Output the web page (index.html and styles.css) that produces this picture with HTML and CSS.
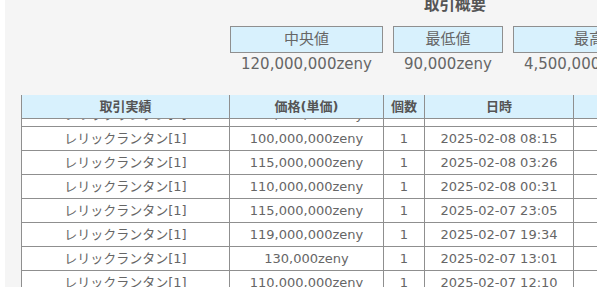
FILE: index.html
```html
<!DOCTYPE html>
<html lang="ja">
<head>
<meta charset="utf-8">
<title>取引概要</title>
<link rel="stylesheet" href="styles.css">
</head>
<body>
<div class="panel">
  <section class="summary">
    <h2 class="summary-title">取引概要</h2>
    <div class="stats">
      <div class="stat">
        <div class="stat-label">中央値</div>
        <div class="stat-value">120,000,000zeny</div>
      </div>
      <div class="stat">
        <div class="stat-label">最低値</div>
        <div class="stat-value">90,000zeny</div>
      </div>
      <div class="stat">
        <div class="stat-label">最高値</div>
        <div class="stat-value">4,500,000,000zeny</div>
      </div>
    </div>
  </section>

  <div class="history">
    <table class="grid grid-head">
      <colgroup><col class="c1"><col class="c2"><col class="c3"><col class="c4"><col class="c5"></colgroup>
      <thead>
        <tr><th>取引実績</th><th>価格(単価)</th><th>個数</th><th>日時</th><th></th></tr>
      </thead>
    </table>
    <div class="body-clip">
      <table class="grid grid-body">
        <colgroup><col class="c1"><col class="c2"><col class="c3"><col class="c4"><col class="c5"></colgroup>
        <tbody>
          <tr><td>レリックランタン[1]</td><td>110,000,000zeny</td><td>1</td><td>2025-02-08 09:02</td><td></td></tr>
          <tr><td>レリックランタン[1]</td><td>100,000,000zeny</td><td>1</td><td>2025-02-08 08:15</td><td></td></tr>
          <tr><td>レリックランタン[1]</td><td>115,000,000zeny</td><td>1</td><td>2025-02-08 03:26</td><td></td></tr>
          <tr><td>レリックランタン[1]</td><td>110,000,000zeny</td><td>1</td><td>2025-02-08 00:31</td><td></td></tr>
          <tr><td>レリックランタン[1]</td><td>115,000,000zeny</td><td>1</td><td>2025-02-07 23:05</td><td></td></tr>
          <tr><td>レリックランタン[1]</td><td>119,000,000zeny</td><td>1</td><td>2025-02-07 19:34</td><td></td></tr>
          <tr><td>レリックランタン[1]</td><td>130,000zeny</td><td>1</td><td>2025-02-07 13:01</td><td></td></tr>
          <tr><td>レリックランタン[1]</td><td>110,000,000zeny</td><td>1</td><td>2025-02-07 12:10</td><td></td></tr>
        </tbody>
      </table>
    </div>
  </div>
</div>
</body>
</html>
```

FILE: styles.css
```css
html, body {
  margin: 0;
  padding: 0;
  background: #ffffff;
}

body {
  font-family: "DejaVu Sans", "Noto Sans CJK JP", sans-serif;
  color: #666666;
  overflow: hidden;
}

.panel {
  margin-left: 5px;
  height: 287px;
  background: #f5f5f5;
  overflow: hidden;
  width: 592px;
}

.summary {
  margin-left: 225px;
  width: 450px;
  margin-top: -5px;
}

.summary-title {
  margin: 0;
  text-align: center;
  font-size: 15.5px;
  line-height: 20px;
  font-weight: bold;
  color: #555555;
}

.stats {
  display: flex;
  gap: 10px;
  margin-top: 11px;
}

.stat {
  display: flex;
  flex-direction: column;
  flex: none;
}

.stat-label {
  height: 25px;
  line-height: 25px;
  border: 1px solid #8f8f8f;
  background: #d8f1fd;
  text-align: center;
  font-size: 15px;
  color: #666666;
}

.stat-value {
  margin-top: 1px;
  padding: 0 11px;
  font-size: 15px;
  line-height: 20px;
  text-align: center;
  white-space: nowrap;
}

.history {
  margin-top: 21px;
  margin-left: 16px;
  width: 700px;
}

.grid {
  border-collapse: collapse;
  table-layout: fixed;
  width: 700px;
  font-size: 13px;
}

.c1 { width: 208px; }
.c2 { width: 154px; }
.c3 { width: 41px; }
.c4 { width: 149px; }
.c5 { width: 148px; }

.grid th,
.grid td {
  padding: 0;
  text-align: center;
  white-space: nowrap;
  overflow: hidden;
  border-left: 1px solid #8f8f8f;
  border-right: 1px solid #8f8f8f;
  border-bottom: 1px solid #8f8f8f;
}

.grid th {
  height: 23px;
  background: #d8f1fd;
  font-weight: bold;
  color: #555555;
  line-height: 23px;
}

.grid td {
  height: 23px;
  line-height: 23px;
  background: #ffffff;
}

.body-clip {
  height: 170px;
  overflow: hidden;
}

.grid-body {
  margin-top: -16px;
}
```
